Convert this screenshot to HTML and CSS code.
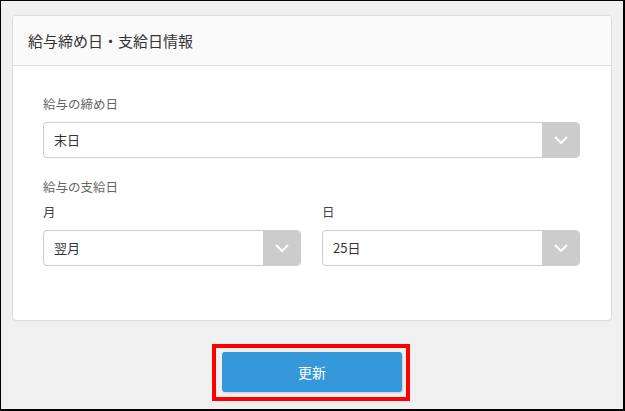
FILE: index.html
```html
<!DOCTYPE html>
<html lang="ja">
<head>
<meta charset="utf-8">
<link rel="stylesheet" href="styles.css">
</head>
<body>
<div class="page">
  <section class="card">
    <header class="card-header">給与締め日・支給日情報</header>
    <div class="card-body">
      <div class="label">給与の締め日</div>
      <div class="select">
        <span class="value">末日</span>
        <span class="arrow"><svg width="14" height="8" viewBox="0 0 14 8"><polyline points="1,1 7,7 13,1" fill="none" stroke="#fff" stroke-width="2"/></svg></span>
      </div>
      <div class="label label-group">給与の支給日</div>
      <div class="cols">
        <div class="col">
          <div class="label sub">月</div>
          <div class="select">
            <span class="value">翌月</span>
            <span class="arrow"><svg width="14" height="8" viewBox="0 0 14 8"><polyline points="1,1 7,7 13,1" fill="none" stroke="#fff" stroke-width="2"/></svg></span>
          </div>
        </div>
        <div class="col">
          <div class="label sub">日</div>
          <div class="select">
            <span class="value">25日</span>
            <span class="arrow"><svg width="14" height="8" viewBox="0 0 14 8"><polyline points="1,1 7,7 13,1" fill="none" stroke="#fff" stroke-width="2"/></svg></span>
          </div>
        </div>
      </div>
    </div>
  </section>
  <div class="actions">
    <div class="highlight">
      <button class="btn" type="button">更新</button>
    </div>
  </div>
</div>
</body>
</html>
```
FILE: styles.css
```css
* { box-sizing: border-box; }
html, body { margin: 0; padding: 0; }
body {
  font-family: "Noto Sans CJK JP", "Noto Sans", sans-serif;
  color: #333;
}
.page {
  width: 625px;
  height: 411px;
  background: #f0f0f0;
  border-style: solid;
  border-color: #000;
  border-width: 1px 2px 2px 1px;
  padding: 14px 10px 0 11px;
}
.card {
  width: 600px;
  border: 1px solid #dcdcdc;
  border-radius: 4px;
  background: #fff;
  overflow: hidden;
}
.card-header {
  height: 50px;
  line-height: 49px;
  background: #fafafa;
  border-bottom: 1px solid #e0e0e0;
  padding-left: 15px;
  font-size: 15px;
  color: #333;
}
.card-body {
  padding: 29px 31px 54px 30px;
}
.label {
  font-size: 12.5px;
  line-height: 18px;
  color: #666;
  margin-bottom: 9px;
}
.label-group {
  margin-top: 20px;
  margin-bottom: 7px;
}
.label.sub {
  color: #444;
  margin-bottom: 9px;
}
.cols {
  display: flex;
  gap: 21px;
}
.col { flex: 1; }
.select {
  display: flex;
  height: 36px;
  border: 1px solid #ccc;
  border-radius: 4px;
  overflow: hidden;
  background: #fff;
}
.select .value {
  flex: 1;
  padding-left: 10px;
  font-size: 13px;
  line-height: 34px;
  color: #333;
}
.select .arrow {
  width: 37px;
  background: #ccc;
  display: flex;
  align-items: center;
  justify-content: center;
}
.actions {
  display: flex;
  justify-content: center;
  margin-top: 23px;
  padding-right: 3px;
}
.highlight {
  border: 4px solid #ff0000;
  padding: 4px 4px 5px 6px;
}
.btn {
  display: block;
  width: 180px;
  height: 40px;
  border: none;
  border-radius: 3px;
  background: #3498db;
  color: #fff;
  font-family: "Noto Sans CJK JP", "Noto Sans", sans-serif;
  font-size: 14px;
  box-shadow: 1px 1px 2px rgba(0,0,0,0.15);
  padding: 0;
}
```
